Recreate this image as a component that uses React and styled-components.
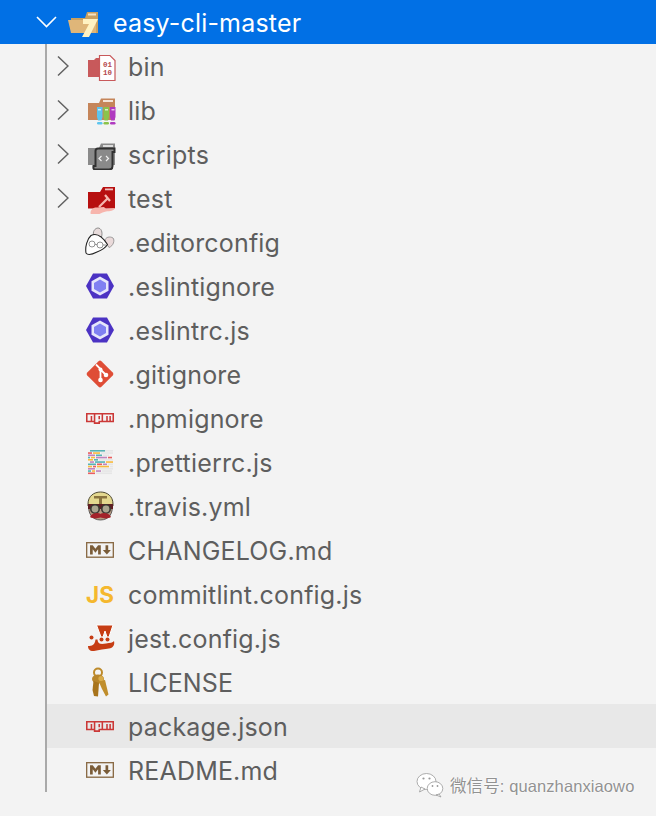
import React from "react";
import styled, { createGlobalStyle } from "styled-components";

const Global = createGlobalStyle`
  html, body { margin: 0; padding: 0; background: #f3f3f3; }
  body { height: 816px; overflow: hidden; }
`;

const Page = styled.div`
  position: relative;
  width: 656px;
  height: 816px;
  background: #f3f3f3;
  font-family: Inter, "Noto Sans", "Liberation Sans", sans-serif;
  overflow: hidden;
`;

const RootRow = styled.div`
  display: flex;
  align-items: center;
  height: 44px;
  padding-left: 36px;
  background: #0170e5;
  color: #fff;
`;

const Children = styled.div`
  margin-left: 45px;
  border-left: 2px solid #a9a9a9;
`;

const Row = styled.div`
  display: flex;
  align-items: center;
  height: 44px;
  padding-left: 10px;
  background: ${(p) => (p.$active ? "#e8e8e8" : "transparent")};
  color: #5e5e5e;
`;

const ChevronSlot = styled.div`
  flex: none;
  width: 28px;
  height: 44px;
  display: flex;
  align-items: center;
`;

const RootChevronSlot = styled.div`
  flex: none;
  width: 32px;
  display: flex;
  align-items: center;
`;

const IconSvg = styled.svg`
  flex: none;
  width: 32px;
  height: 32px;
  margin-right: 11px;
`;

const RootIcon = styled.svg`
  flex: none;
  width: 32px;
  height: 32px;
  margin-right: 13px;
`;

const Label = styled.span`
  font-size: 25px;
  letter-spacing: 0.18px;
  line-height: 44px;
  padding-top: 2px;
  white-space: nowrap;
`;

const Watermark = styled.div`
  position: absolute;
  left: 416px;
  top: 772px;
  display: flex;
  align-items: center;
  gap: 6px;
`;

const WatermarkText = styled.span`
  font-family: "Liberation Sans", "Noto Sans CJK SC", sans-serif;
  font-size: 16.5px;
  letter-spacing: 0.1px;
  color: #929292;
  white-space: nowrap;
  text-shadow: 0 0 2px #fff, 0 0 2px #fff;
`;

const Closed = () => (
  <svg width="12" height="22" viewBox="0 0 12 22">
    <path d="M1 1.5 L11 11 L1 20.5" fill="none" stroke="#616161" strokeWidth="1.5" />
  </svg>
);

const Open = () => (
  <svg width="21" height="12" viewBox="0 0 21 12">
    <path d="M1 1 L10.5 10.5 L20 1" fill="none" stroke="#fff" strokeWidth="1.6" />
  </svg>
);

const Npm = () => (
  <g transform="translate(1 11) scale(1.556)">
    <path
      fill="#cb3837"
      fillRule="evenodd"
      d="M0 0h18v6H9v1H5V6H0zm1 1v4h2V2h1v3h1V1zm5 0v5h2V5h2V1zm2 1h1v2H8zm3-1v4h2V2h1v3h1V2h1v3h1V1z"
    />
  </g>
);

const Eslint = () => (
  <g>
    <path d="M1 16 L8 3.5 H22 L29 16 L22 28.5 H8 Z" fill="#4b32c3" />
    <path d="M15 6.5 L23.5 11.2 V20.8 L15 25.5 L6.5 20.8 V11.2 Z" fill="#e6e6fb" />
    <path d="M15 9.5 L21 13 V19 L15 22.5 L9 19 V13 Z" fill="#8080f2" />
  </g>
);

const Markdown = () => (
  <g transform="translate(1 8) scale(0.1346)">
    <rect x="5" y="5" width="198" height="108" fill="none" stroke="#8a6b46" strokeWidth="10" />
    <path
      fill="#7a5c38"
      transform="translate(0 -5)"
      d="M30 98V30h20l20 25 20-25h20v68H90V59L70 84 50 59v39zm125 0l-30-33h20V30h20v35h20z"
    />
  </g>
);

const prettierLines = [
  [[5, 15, "#56b3b4"], [20, 8, "#e6e6e6"]],
  [[3, 4, "#ea5e5e"], [8, 7, "#f7ba3e"], [16, 12, "#e6e6e6"]],
  [[3, 7, "#bf85bf"], [11, 6, "#56b3b4"], [18, 6, "#e6e6e6"]],
  [[3, 2, "#56b3b4"], [6, 4, "#f7ba3e"], [11, 11, "#bf85bf"], [23, 4, "#ea5e5e"]],
  [[3, 5, "#f7ba3e"], [9, 4, "#56b3b4"], [14, 14, "#e6e6e6"]],
  [[5, 4, "#bf85bf"], [10, 10, "#56b3b4"], [21, 7, "#f7ba3e"]],
  [[3, 8, "#56b3b4"], [12, 5, "#ea5e5e"], [18, 4, "#bf85bf"], [23, 5, "#e6e6e6"]],
  [[3, 4, "#f7ba3e"], [8, 3, "#ea5e5e"], [12, 12, "#f7ba3e"], [25, 3, "#e6e6e6"]],
  [[3, 7, "#bf85bf"], [11, 17, "#e6e6e6"]],
  [[3, 3, "#56b3b4"], [7, 3, "#f7ba3e"], [11, 5, "#bf85bf"], [17, 10, "#e6e6e6"]],
  [[3, 7, "#ea5e5e"], [11, 16, "#e6e6e6"]],
];

const icons = {
  bin: (
    <g>
      <path d="M3 10H9L11 8H18V27H3Z" fill="#c8595b" />
      <path d="M14.5 5.5H25L30 10.5V30.5H14.5Z" fill="#fff" stroke="#c8595b" strokeWidth="1.2" />
      <text x="22.5" y="16.5" textAnchor="middle" fontFamily="Liberation Mono" fontWeight="700" fontSize="7.5" fill="#b5484b">01</text>
      <text x="22.5" y="25" textAnchor="middle" fontFamily="Liberation Mono" fontWeight="700" fontSize="7.5" fill="#b5484b">10</text>
    </g>
  ),
  lib: (
    <g>
      <path d="M3 9H14L16 4.5H30V26H3Z" fill="#c5855a" />
      <rect x="18" y="6" width="10" height="2" fill="#f4e4d8" />
      <path d="M12 13h5.500v10l-1 3.500h-3.500l-1-3.500z" fill="#5cc5ef" />
      <path d="M18.500 13H24v10l-1 3.500h-3.500l-1-3.500z" fill="#8bc34a" />
      <path d="M25 13h5.500v10l-1 3.500H26l-1-3.500z" fill="#b03ac0" />
      <rect x="12" y="28" width="5.5" height="2.4" rx="1.2" fill="#5cc5ef" />
      <rect x="18.5" y="28" width="5.5" height="2.4" rx="1.2" fill="#8bc34a" />
      <rect x="25" y="28" width="5.5" height="2.4" rx="1.2" fill="#b03ac0" />
      <rect x="13" y="15" width="3" height="1.5" fill="#fff" opacity=".7" />
      <rect x="20" y="15" width="3" height="1.5" fill="#fff" opacity=".7" />
      <rect x="26.5" y="15" width="3" height="1.5" fill="#fff" opacity=".7" />
    </g>
  ),
  scripts: (
    <g>
      <path d="M3 10H14L16 5.5H30V27H3Z" fill="#8a8a8a" />
      <rect x="18" y="7" width="10" height="2" fill="#dcdcdc" />
      <path d="M13 10.5H29.500V14H27.500V28Q27.500 31.500 24 31.500H10Q8 31.500 8.500 28H10.500V13Q10.500 10.500 13 10.500Z" fill="#8a8a8a" stroke="#303030" strokeWidth="2" />
      <path d="M16.500 18l-2.500 2.500 2.500 2.500M21 18l2.500 2.500-2.500 2.500" fill="none" stroke="#f0f0f0" strokeWidth="1.2" />
    </g>
  ),
  test: (
    <g>
      <path d="M3 10H15L18 5H30V26.500H3Z" fill="#b71010" />
      <rect x="20" y="6.500" width="8" height="1.8" fill="#f0c0c0" />
      <path d="M20 13L25 19M22 17L14 25" stroke="#f4b9b0" strokeWidth="2.2" fill="none" />
      <path d="M6 33C4 28 9 25 12 25.5L19 25L21 27L30 26C29 29 25 29 21 29.5C17 30 14 33 11 33Z" fill="#f7b5ad" />
    </g>
  ),
  editorconfig: (
    <g>
      <path d="M9 10C7 6 10 2 13 2C16 2 18 6 16.500 11Z" fill="#e8dcdc" stroke="#777" strokeWidth=".8" />
      <path d="M20 15C20 11 25 10 28 12C30 14 28.500 20 24 21.500Z" fill="#eadada" stroke="#888" strokeWidth=".8" />
      <path d="M1 27C0 21 2 13 6 9.500C11 7 17 10 22.500 18.500C21 21 17 24 12 26C8 28 3 30 1 27Z" fill="#fff" stroke="#222" strokeWidth="1.1" />
      <circle cx="7" cy="18" r="3" fill="none" stroke="#777" strokeWidth=".8" />
      <circle cx="15" cy="19" r="3" fill="none" stroke="#777" strokeWidth=".8" />
      <path d="M10 18.300L12 18.700M18 19L21 19" stroke="#777" strokeWidth=".8" />
    </g>
  ),
  eslint: <Eslint />,
  git: (
    <g>
      <rect x="5" y="6" width="20" height="20" rx="2" transform="rotate(45 15 16)" fill="#df4d36" />
      <path d="M11 6.500L15.500 11V22M15.500 11.500L21 17" fill="none" stroke="#fff" strokeWidth="1.8" />
      <circle cx="15.500" cy="11.500" r="2" fill="#fff" />
      <circle cx="15.500" cy="22" r="2.3" fill="#fff" />
      <circle cx="21" cy="17" r="2.3" fill="#fff" />
    </g>
  ),
  npm: <Npm />,
  prettier: (
    <g>
      {prettierLines.map((line, i) =>
        line.map(([x, w, c], j) => <rect key={`${i}-${j}`} x={x} y={4 + i * 2.25} width={w} height="1.6" fill={c} />)
      )}
    </g>
  ),
  travis: (
    <g>
      <path d="M3 14C3 6 9 2 15.500 2C22 2 28 6 28 14L28 16H3Z" fill="#e4d88f" stroke="#4f4a32" strokeWidth="1" />
      <path d="M9 6H22V8.500H17V14H14V8.500H9Z" fill="#8a7440" />
      <path d="M4 15H27C28.500 23 24 30 15.500 30C7 30 2.500 23 4 15Z" fill="#b89a82" stroke="#444" strokeWidth=".8" />
      <path d="M3 14H28V19H3Z" fill="#5f1f24" />
      <circle cx="10" cy="19" r="4.200" fill="#a9a58f" stroke="#3a3a34" strokeWidth="1.6" />
      <circle cx="21" cy="19" r="4.200" fill="#a9a58f" stroke="#3a3a34" strokeWidth="1.6" />
      <path d="M5 27C7 22.500 13 22.500 15.500 24C18 22.500 24 22.500 26 27C22 29.500 18 28 15.500 27.500C13 28 9 29.500 5 27Z" fill="#a3232a" />
    </g>
  ),
  markdown: <Markdown />,
  js: (
    <text x="15" y="25" textAnchor="middle" fontFamily="Inter" fontWeight="700" fontSize="22.5" fill="#f5b82e">JS</text>
  ),
  jest: (
    <g fill="#c63d14">
      <path d="M11.500 3H28L24 15H22L20 9L18 15H16Z" stroke="#fff" strokeWidth="1" />
      <circle cx="6.500" cy="15.500" r="2" />
      <circle cx="16.500" cy="17.500" r="2" />
      <circle cx="22.500" cy="17.500" r="2" />
      <path d="M3 24C7 24 10 23 10.500 17.500H12.500C13 23 17 22 21 21.500C25 21 28 20.500 29 19C30 23 28 26 24 26.500C20 27 14 28 9 29C6 29.500 3 28 3 24Z" />
    </g>
  ),
  license: (
    <g>
      <circle cx="13" cy="6.500" r="4" fill="none" stroke="#bd8a2a" strokeWidth="2" />
      <ellipse cx="13" cy="13" rx="6" ry="4.500" fill="#b8862b" />
      <path d="M8.500 15L7.500 24L9 30L13 30.500L14 17Z" fill="#a8741c" />
      <path d="M13.500 15L17 23L21 30.500L23.500 28.500L20 14Z" fill="#c08e2c" />
      <circle cx="16" cy="12.500" r="2.600" fill="#d9ac4a" />
    </g>
  ),
};

const items = [
  { name: "bin", icon: "bin", dir: true },
  { name: "lib", icon: "lib", dir: true },
  { name: "scripts", icon: "scripts", dir: true },
  { name: "test", icon: "test", dir: true },
  { name: ".editorconfig", icon: "editorconfig" },
  { name: ".eslintignore", icon: "eslint" },
  { name: ".eslintrc.js", icon: "eslint" },
  { name: ".gitignore", icon: "git" },
  { name: ".npmignore", icon: "npm" },
  { name: ".prettierrc.js", icon: "prettier" },
  { name: ".travis.yml", icon: "travis" },
  { name: "CHANGELOG.md", icon: "markdown" },
  { name: "commitlint.config.js", icon: "js" },
  { name: "jest.config.js", icon: "jest" },
  { name: "LICENSE", icon: "license" },
  { name: "package.json", icon: "npm", active: true },
  { name: "README.md", icon: "markdown" },
];

export default function App() {
  return (
    <Page>
      <Global />
      <RootRow>
        <RootChevronSlot>
          <Open />
        </RootChevronSlot>
        <RootIcon viewBox="0 0 32 32">
          <path d="M3 12H17L19 6H30V27H3Z" fill="#c9a060" />
          <rect x="20" y="7.500" width="8" height="2" fill="#f3e2c4" />
          <path d="M0 14H28V27H3Z" fill="#dfb679" />
          <path d="M15 13H30L21 31H14L21 18H15Z" fill="#fff2c2" />
        </RootIcon>
        <Label>easy-cli-master</Label>
      </RootRow>
      <Children>
        {items.map((item) => (
          <Row key={item.name} $active={item.active}>
            <ChevronSlot>{item.dir && <Closed />}</ChevronSlot>
            <IconSvg viewBox="0 0 32 32">{icons[item.icon]}</IconSvg>
            <Label>{item.name}</Label>
          </Row>
        ))}
      </Children>
      <Watermark>
        <svg width="28" height="26" viewBox="0 0 28 26">
          <ellipse cx="10.500" cy="9.500" rx="9.500" ry="8" fill="#fff" stroke="#999" strokeWidth=".8" />
          <path d="M5 15L3.500 20L9 17Z" fill="#fff" stroke="#999" strokeWidth=".8" />
          <ellipse cx="19" cy="16.500" rx="7.800" ry="6.800" fill="#fff" stroke="#999" strokeWidth=".8" />
          <path d="M23 22L25 25L20 23Z" fill="#fff" stroke="#999" strokeWidth=".8" />
          <circle cx="7.500" cy="6.500" r="1.100" fill="#999" />
          <circle cx="13.500" cy="6.500" r="1.100" fill="#999" />
          <circle cx="16.500" cy="14" r=".9" fill="#999" />
          <circle cx="21.500" cy="14" r=".9" fill="#999" />
        </svg>
        <WatermarkText>微信号: quanzhanxiaowo</WatermarkText>
      </Watermark>
    </Page>
  );
}
